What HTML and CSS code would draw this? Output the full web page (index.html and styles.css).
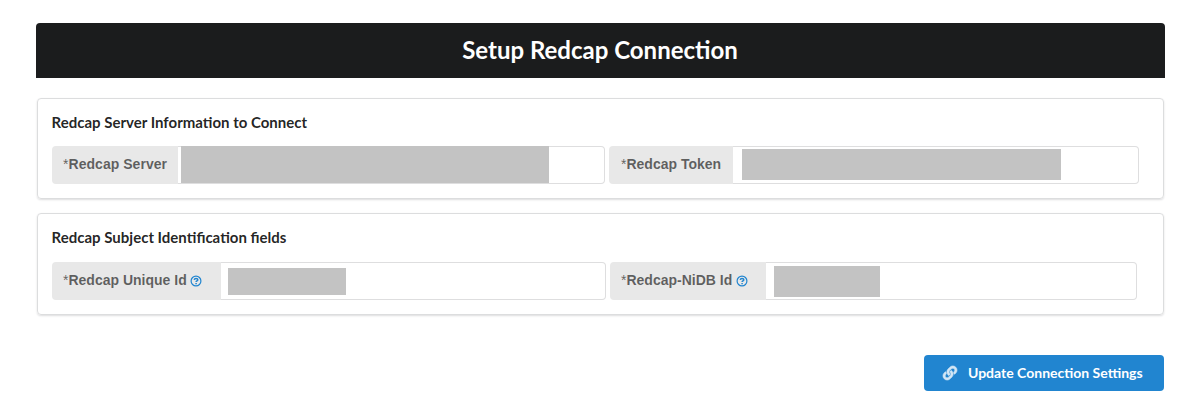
FILE: index.html
```html
<!DOCTYPE html>
<html lang="en">
<head>
<meta charset="utf-8">
<title>Setup Redcap Connection</title>
<link rel="stylesheet" href="styles.css">
</head>
<body>
<main class="page">
  <h2 class="page-header">Setup Redcap Connection</h2>
  <form class="form">
    <section class="segment server">
      <h3 class="segment-title">Redcap Server Information to Connect</h3>
      <div class="fields">
        <div class="field field-server">
          <label class="label"><span class="required">*</span>Redcap Server</label>
          <div class="input"><span class="mask"></span></div>
        </div>
        <div class="field field-token">
          <label class="label"><span class="required">*</span>Redcap Token</label>
          <div class="input"><span class="mask"></span></div>
        </div>
      </div>
    </section>
    <section class="segment subject">
      <h3 class="segment-title">Redcap Subject Identification fields</h3>
      <div class="fields">
        <div class="field field-unique">
          <label class="label"><span class="required">*</span>Redcap Unique Id
            <svg class="help" viewBox="0 0 12 12"><circle cx="6" cy="6" r="4.9"/><path class="mark" d="M4.2 4.8C4.4 3.8 5.1 3.4 6 3.4c1 0 1.8.5 1.8 1.4C7.8 5.9 6.1 5.8 6.1 7"/><path class="mark" d="M6.1 7.9v1.3"/></svg>
          </label>
          <div class="input"><span class="mask"></span></div>
        </div>
        <div class="field field-nidb">
          <label class="label"><span class="required">*</span>Redcap-NiDB Id
            <svg class="help" viewBox="0 0 12 12"><circle cx="6" cy="6" r="4.9"/><path class="mark" d="M4.2 4.8C4.4 3.8 5.1 3.4 6 3.4c1 0 1.8.5 1.8 1.4C7.8 5.9 6.1 5.8 6.1 7"/><path class="mark" d="M6.1 7.9v1.3"/></svg>
          </label>
          <div class="input"><span class="mask"></span></div>
        </div>
      </div>
    </section>
    <div class="actions">
      <button class="button" type="button">
        <svg class="link-icon" viewBox="0 0 512 512"><path d="M326.612 185.391c59.747 59.809 58.927 155.698.36 214.59-.11.12-.24.25-.36.37l-67.2 67.2c-59.27 59.27-155.699 59.262-214.96 0-59.27-59.26-59.27-155.7 0-214.96l37.106-37.106c9.84-9.84 26.786-3.3 27.294 10.606.648 17.722 3.826 35.527 9.69 52.721 1.986 5.822.567 12.262-3.783 16.612l-13.087 13.087c-28.026 28.026-28.905 73.66-1.155 101.96 28.024 28.579 74.086 28.749 102.325.51l67.2-67.19c28.191-28.191 28.073-73.757 0-101.83-3.701-3.694-7.429-6.564-10.341-8.569a16.037 16.037 0 0 1-6.947-12.606c-.396-10.567 3.348-21.456 11.698-29.806l21.054-21.055c5.521-5.521 14.182-6.199 20.584-1.731a152.482 152.482 0 0 1 20.522 17.197zM467.547 44.449c-59.261-59.262-155.69-59.27-214.96 0l-67.2 67.2c-.12.12-.25.25-.36.37-58.566 58.892-59.387 154.781.36 214.59a152.454 152.454 0 0 0 20.521 17.196c6.402 4.468 15.064 3.789 20.584-1.731l21.054-21.055c8.35-8.35 12.094-19.239 11.698-29.806a16.037 16.037 0 0 0-6.947-12.606c-2.912-2.005-6.64-4.875-10.341-8.569-28.073-28.073-28.191-73.639 0-101.83l67.2-67.19c28.239-28.239 74.3-28.069 102.325.51 27.75 28.3 26.872 73.934-1.155 101.96l-13.087 13.087c-4.35 4.35-5.769 10.79-3.783 16.612 5.864 17.194 9.042 34.999 9.69 52.721.509 13.906 17.454 20.446 27.294 10.606l37.106-37.106c59.271-59.259 59.271-155.699.001-214.959z"/></svg>
        <span>Update Connection Settings</span>
      </button>
    </div>
  </form>
</main>
</body>
</html>
```
FILE: styles.css
```css
* { box-sizing: border-box; }

body {
  margin: 0;
  background: #fff;
  color: rgba(0, 0, 0, .87);
  font: 14px/20px Lato, "Liberation Sans", sans-serif;
}

.page { padding: 23px 31px 0 36px; }

.page-header {
  margin: 0;
  height: 55px;
  padding-right: 1px;
  background: #1b1c1d;
  color: #fff;
  border-radius: 4px 4px 0 0;
  font-size: 24px;
  font-weight: 700;
  line-height: 54px;
  text-align: center;
}

.form { padding: 20px 1px 0; }

.segment {
  height: 101px;
  padding: 14px 14px 0;
  border: 1px solid #dcddde;
  border-radius: 4px;
  box-shadow: 0 1px 2px 0 rgba(34, 36, 38, .15);
}

.segment + .segment { height: 102px; margin-top: 14px; }

.segment-title {
  margin: 0 0 14px;
  font-size: 15px;
  font-weight: 700;
  line-height: 19px;
  text-indent: -.4px;
}

.subject .segment-title { margin-bottom: 15px; }

.fields { display: flex; gap: 4px; }

.field { display: flex; height: 38px; }
.field-server { width: 553px; }
.field-token { width: 530px; }
.field-unique { width: 554px; }
.field-nidb { width: 527px; }

.label {
  flex: none;
  padding-left: 11px;
  background: #e8e8e8;
  border-radius: 4px 0 0 4px;
  color: rgba(0, 0, 0, .6);
  font: 700 14px/36px "Liberation Sans", Arial, sans-serif;
  white-space: nowrap;
}

.required { font-weight: 400; }

.field-server .label { width: 126px; letter-spacing: .04px; }
.field-token .label { width: 124px; padding-left: 12px; }
.field-unique .label { width: 169px; }
.field-nidb .label { width: 156px; }

.input {
  flex: 1;
  border: 1px solid #dededf;
  border-left: 0;
  border-radius: 0 4px 4px 0;
}

.mask { display: block; background: #c3c3c3; }
.field-server .mask { width: 368px; height: 37px; margin: -1px 0 0 3px; }
.field-token .mask { width: 319px; height: 31px; margin: 2px 0 0 9px; }
.field-unique .mask { width: 118px; height: 27px; margin: 5px 0 0 7px; }
.field-nidb .mask { width: 106px; height: 31px; margin: 3px 0 0 8px; }

.help {
  width: 12px;
  height: 12px;
  margin-left: -.5px;
  vertical-align: -2px;
  fill: none;
  stroke: #2185d0;
  stroke-width: 1.2;
}

.mark { stroke-width: 1.5; }

.actions { display: flex; justify-content: flex-end; padding-top: 40px; }

.button {
  display: flex;
  align-items: center;
  gap: 11px;
  width: 240px;
  height: 36px;
  padding: 0 0 0 19px;
  border: 0;
  border-radius: 4px;
  background: #2185d0;
  color: #fff;
  font: 700 14px/14px Lato, sans-serif;
  white-space: nowrap;
}

.link-icon {
  width: 14px;
  height: 14px;
  overflow: visible;
  fill: #fff;
  stroke: #fff;
  stroke-width: 24;
  opacity: .8;
}
```
